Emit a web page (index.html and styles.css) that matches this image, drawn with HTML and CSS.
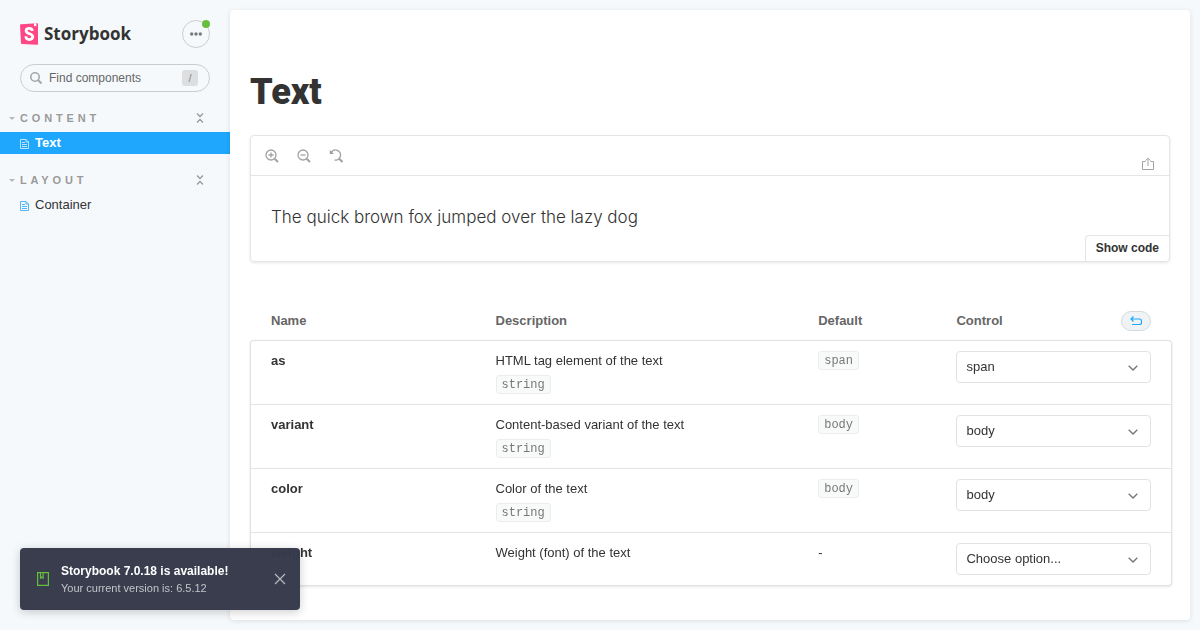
FILE: index.html
```html
<!DOCTYPE html>
<html lang="en">
  <head>
    <meta charset="UTF-8" />
    <meta name="viewport" content="width=device-width, initial-scale=1.0" />
    <title>Content / Text - Storybook</title>
    <link rel="stylesheet" href="styles.css">
  </head>
  <body>
    <nav class="sidebar">
      <div class="sidebar-header">
        <a class="brand" href="#">
          <svg width="19" height="22" viewBox="0 0 19 22" aria-hidden="true">
            <path d="M1 1.3 17.4 0.2a.6.6 0 0 1 .6.6V21a.7.7 0 0 1-.7.8L1.7 21a.7.7 0 0 1-.7-.7L0 2.100Q0 1.400 1 1.300z" fill="#ff4785" />
            <path d="M14 .4l2.300-.1.1 3-.4.1-.8-.7-1.200.6z" fill="#fff" />
            <path d="M12.300 8C12.200 6 10.900 5.300 9.300 5.300 7.400 5.300 6.100 6.200 6.100 7.800c0 3.600 6.600 2.300 6.600 5.800 0 1.800-1.400 2.900-3.400 2.900-2.200 0-3.500-1-3.400-3.200" fill="none" stroke="#fff" stroke-width="2.800" />
          </svg>
          <span>Storybook</span>
        </a>
        <button class="menu-button" aria-label="Shortcuts">
          <svg width="14" height="14" viewBox="0 0 14 14" fill="#777a7d">
            <circle cx="2.700" cy="7" r="1.700" />
            <circle cx="7" cy="7" r="1.700" />
            <circle cx="11.300" cy="7" r="1.700" />
          </svg>
          <span class="menu-dot"></span>
        </button>
      </div>
      <label class="search">
        <svg width="12" height="12" viewBox="0 0 12 12" fill="none" stroke="#a5a7a9" stroke-width="1.600">
          <circle cx="5" cy="5" r="4.200" />
          <path d="M8 8l3.500 3.500" stroke-width="2" />
        </svg>
        <input type="text" placeholder="Find components" aria-label="Find components" />
        <kbd>/</kbd>
      </label>

      <section class="group">
        <div class="group-header">
          <button class="group-toggle"><span class="caret"></span>CONTENT</button>
          <button class="collapse" aria-label="Collapse content">
            <svg width="8" height="10" viewBox="0 0 8 10" fill="none" stroke="#999" stroke-width="1.400">
              <path d="M1 .5l3 3 3-3M1 9.500l3-3 3 3" />
            </svg>
          </button>
        </div>
        <a class="item selected" href="#text">
          <svg width="10" height="10" viewBox="0 0 10 10" fill="none" stroke="currentColor">
            <path d="M1.500.5h5.500l2.500 2.500v6.500h-8zM7 .5v2.500h2.500M3 3.500h3M3 5.500h5M3 7.500h5" />
          </svg>
          Text
        </a>
      </section>

      <section class="group">
        <div class="group-header">
          <button class="group-toggle"><span class="caret"></span>LAYOUT</button>
          <button class="collapse" aria-label="Collapse layout">
            <svg width="8" height="10" viewBox="0 0 8 10" fill="none" stroke="#999" stroke-width="1.400">
              <path d="M1 .5l3 3 3-3M1 9.500l3-3 3 3" />
            </svg>
          </button>
        </div>
        <a class="item" href="#container">
          <svg width="10" height="10" viewBox="0 0 10 10" fill="none" stroke="currentColor">
            <path d="M1.500.5h5.500l2.500 2.500v6.500h-8zM7 .5v2.500h2.500M3 3.500h3M3 5.500h5M3 7.500h5" />
          </svg>
          Container
        </a>
      </section>
    </nav>

    <main class="docs">
      <h1>Text</h1>

      <div class="preview">
        <div class="toolbar">
          <button aria-label="Zoom in">
            <svg width="14" height="14" viewBox="0 0 14 14">
              <circle cx="6" cy="6" r="5" />
              <path d="M9.700 9.700l3.300 3.300" stroke-width="2" />
              <path d="M3.500 6h5M6 3.500v5" />
            </svg>
          </button>
          <button aria-label="Zoom out">
            <svg width="14" height="14" viewBox="0 0 14 14">
              <circle cx="6" cy="6" r="5" />
              <path d="M9.700 9.700l3.300 3.300" stroke-width="2" />
              <path d="M3.500 6h5" />
            </svg>
          </button>
          <button aria-label="Reset zoom">
            <svg width="14" height="14" viewBox="0 0 14 14">
              <path d="M2.500 3A5 5 0 1 1 5.500 10.900" />
              <path d="M10.200 9.700l3.300 3.300" stroke-width="2" />
              <path d="M.8 1v4h4z" fill="#999" stroke="none" />
            </svg>
          </button>
          <a class="share" href="#canvas" aria-label="Open canvas in new tab">
            <svg width="12" height="14" viewBox="0 0 12 14">
              <path d="M3.500 4.500h-3v8h11v-8h-3M6 9V1.500M3.500 3.700L6 1.200l2.500 2.500" />
            </svg>
          </a>
        </div>
        <div class="story">The quick brown fox jumped over the lazy dog</div>
        <button class="show-code">Show code</button>
      </div>

      <table class="args">
        <thead>
          <tr>
            <th>Name</th>
            <th>Description</th>
            <th>Default</th>
            <th>
              <div class="control-head">
                Control
                <button class="reset" aria-label="Reset controls">
                  <svg width="12" height="10" viewBox="0 0 12 10" fill="none" stroke="#1ea7fd" stroke-width="1.200">
                    <path d="M3.500.5L1 3l2.500 2.500M1 3h8.500a2 2 0 0 1 2 2v1.500a2 2 0 0 1-2 2H2" />
                  </svg>
                </button>
              </div>
            </th>
          </tr>
        </thead>
        <tbody>
          <tr>
            <td><label for="as">as</label></td>
            <td>HTML tag element of the text <code>string</code></td>
            <td><code>span</code></td>
            <td>
              <div class="select">
                <select id="as"><option>span</option></select>
                <svg width="10" height="6" viewBox="0 0 10 6"><path d="M.7.7L5 5 9.300.7" /></svg>
              </div>
            </td>
          </tr>
          <tr>
            <td><label for="variant">variant</label></td>
            <td>Content-based variant of the text <code>string</code></td>
            <td><code>body</code></td>
            <td>
              <div class="select">
                <select id="variant"><option>body</option></select>
                <svg width="10" height="6" viewBox="0 0 10 6"><path d="M.7.7L5 5 9.300.7" /></svg>
              </div>
            </td>
          </tr>
          <tr>
            <td><label for="color">color</label></td>
            <td>Color of the text <code>string</code></td>
            <td><code>body</code></td>
            <td>
              <div class="select">
                <select id="color"><option>body</option></select>
                <svg width="10" height="6" viewBox="0 0 10 6"><path d="M.7.7L5 5 9.300.7" /></svg>
              </div>
            </td>
          </tr>
          <tr>
            <td><label for="weight">weight</label></td>
            <td>Weight (font) of the text</td>
            <td>-</td>
            <td>
              <div class="select">
                <select id="weight"><option>Choose option...</option></select>
                <svg width="10" height="6" viewBox="0 0 10 6"><path d="M.7.7L5 5 9.300.7" /></svg>
              </div>
            </td>
          </tr>
        </tbody>
      </table>
    </main>

    <div class="notification" role="status">
      <svg width="12" height="14" viewBox="0 0 12 14" fill="none" stroke="#66bf3c" stroke-width="1.200">
        <path d="M.6.6h10.800v12.800H.6zM3.500.6v5.500L4.800 5l1.300 1.100V.6" />
      </svg>
      <div class="notification-text">
        <strong>Storybook 7.0.18 is available!</strong>
        <span>Your current version is: 6.5.12</span>
      </div>
      <button aria-label="Dismiss notification">
        <svg width="12" height="12" viewBox="0 0 12 12" fill="none" stroke="#b5b6bd" stroke-width="1.300">
          <path d="M1 1l10 10M11 1L1 11" />
        </svg>
      </button>
    </div>
  </body>
</html>
```
FILE: styles.css
```css
* {
  box-sizing: border-box;
}

body {
  margin: 0;
  display: flex;
  min-height: 100vh;
  background: #f6f9fc;
  color: #333;
  font-family: "Liberation Sans", Arial, sans-serif;
  font-size: 13px;
  line-height: 20px;
}

button {
  display: flex;
  align-items: center;
  justify-content: center;
  padding: 0;
  border: 0;
  background: none;
  font-family: inherit;
  cursor: pointer;
}

a {
  color: inherit;
  text-decoration: none;
}

svg {
  flex: none;
  display: block;
}

/* sidebar */
.sidebar {
  width: 230px;
  flex: none;
  padding-top: 20px;
}

.sidebar-header {
  display: flex;
  align-items: center;
  justify-content: space-between;
  padding: 0 20px;
}

.brand {
  display: flex;
  align-items: center;
  gap: 5px;
  font-family: "Open Sans", sans-serif;
  font-size: 17px;
  font-weight: 700;
}

.menu-button {
  position: relative;
  width: 28px;
  height: 28px;
  border: 1px solid #ccc;
  border-radius: 50%;
}

.menu-dot {
  position: absolute;
  top: -1px;
  right: -1px;
  width: 8px;
  height: 8px;
  border-radius: 50%;
  background: #66bf3c;
}

.search {
  display: flex;
  align-items: center;
  gap: 7px;
  height: 28px;
  margin: 16px 20px 12px;
  padding: 0 11px 0 9px;
  border: 1px solid #ccc;
  border-radius: 28px;
}

.search input {
  flex: 1;
  min-width: 0;
  padding: 0;
  border: 0;
  outline: 0;
  background: none;
  font-family: inherit;
  font-size: 12px;
}

.search input::placeholder {
  color: #666;
}

.search kbd {
  width: 16px;
  height: 16px;
  border-radius: 3px;
  background: #dcdedf;
  color: #888;
  font-family: inherit;
  font-size: 11px;
  line-height: 16px;
  text-align: center;
}

.group {
  margin-bottom: 12px;
}

.group-header {
  display: flex;
  align-items: center;
  justify-content: space-between;
  height: 28px;
  padding: 0 26px 0 9px;
}

.group-toggle {
  gap: 5px;
  color: #999;
  font-size: 11px;
  font-weight: 900;
  letter-spacing: 0.35em;
}

.caret {
  border: 3px solid transparent;
  border-top-color: #b5b7b9;
  border-bottom: 0;
}

.item {
  display: flex;
  align-items: center;
  gap: 6px;
  height: 22px;
  padding-left: 19px;
}

.item svg {
  margin-top: 2px;
  color: #4db8fd;
}

.item.selected {
  background: #1ea7fd;
  color: #fff;
  font-weight: bold;
}

.item.selected svg {
  color: #bce4fe;
}

/* docs page */
.docs {
  flex: 1;
  min-width: 0;
  margin: 10px 10px 10px 0;
  padding: 64px 20px 32px;
  border-radius: 4px;
  background: #fff;
  box-shadow: 0 1px 5px rgba(0, 0, 0, 0.1);
}

h1 {
  margin: 0 0 25px;
  font-family: Roboto, sans-serif;
  font-size: 36px;
  font-weight: 900;
  line-height: 36px;
}

.preview {
  display: flex;
  flex-direction: column;
  margin-bottom: 41px;
  border: 1px solid #e5e5e5;
  border-radius: 4px;
  box-shadow: 0 1px 3px rgba(0, 0, 0, 0.1);
}

.toolbar {
  display: flex;
  align-items: center;
  gap: 18px;
  height: 40px;
  padding: 0 15px 0 14px;
  border-bottom: 1px solid #e5e5e5;
}

.toolbar svg {
  fill: none;
  stroke: #a3a3a3;
  stroke-width: 1.3;
}

.share {
  margin-left: auto;
  padding-top: 16px;
}

.toolbar .share svg {
  stroke-width: 1;
}

.story {
  padding: 31px 20px 8px;
  font-family: Inter, sans-serif;
  font-size: 17px;
  font-weight: 300;
}

.show-code {
  align-self: flex-end;
  height: 26px;
  padding: 0 10px 2px;
  border: 1px solid #e5e5e5;
  border-width: 1px 0 0 1px;
  border-radius: 4px 0 0 0;
  color: #333;
  font-size: 12px;
  font-weight: bold;
}

/* args table */
.args {
  width: calc(100% + 2px);
  table-layout: fixed;
  border-collapse: separate;
  border-spacing: 0;
}

.args th {
  width: 25%;
  padding: 8px 15px 9px;
  color: #666;
  text-align: left;
}

.args th:nth-child(2) {
  width: 35%;
}

.args th:nth-child(3) {
  width: 15%;
}

.args th:first-child,
.args td:first-child {
  padding-left: 20px;
}

.args th:first-child {
  padding-left: 21px;
}

.args th:last-child,
.args td:last-child {
  padding-right: 20px;
}

.args th:last-child {
  padding-right: 21px;
}

.control-head {
  display: flex;
  justify-content: space-between;
}

.reset {
  width: 30px;
  height: 20px;
  border: 1px solid #d5d9dc;
  border-radius: 20px;
  background: #eff3f6;
}

.args tbody {
  filter: drop-shadow(0 1px 1px rgba(0, 0, 0, 0.1));
}

.args td {
  padding: 10px 15px;
  border-top: 1px solid #e2e2e2;
  background: #fff;
  vertical-align: top;
}

.args td:first-child {
  border-left: 1px solid #e2e2e2;
  font-weight: bold;
}

.args td:last-child {
  border-right: 1px solid #e2e2e2;
}

.args tr:last-child td {
  border-bottom: 1px solid #e2e2e2;
}

.args tbody tr:first-child td:first-child {
  border-top-left-radius: 4px;
}

.args tbody tr:first-child td:last-child {
  border-top-right-radius: 4px;
}

.args tbody tr:last-child td:first-child {
  border-bottom-left-radius: 4px;
}

.args tbody tr:last-child td:last-child {
  border-bottom-right-radius: 4px;
}

.args code {
  display: block;
  width: max-content;
  height: 19px;
  padding: 1px 5px 0;
  border: 1px solid #ebeeee;
  border-radius: 3px;
  background: #f8fafa;
  color: #777;
  font-family: "Liberation Mono", monospace;
  font-size: 12px;
  line-height: 17px;
}

.args td:nth-child(2) code {
  margin-top: 4px;
}

.select {
  position: relative;
}

.select select {
  display: block;
  width: 100%;
  height: 32px;
  padding: 0 30px 2px 9px;
  border: 1px solid #e2e2e2;
  border-radius: 4px;
  appearance: none;
  background: #fff;
  color: #333;
  font-family: inherit;
  font-size: 13px;
}

.select svg {
  position: absolute;
  top: 14px;
  right: 13px;
  fill: none;
  stroke: #777;
  stroke-width: 1.4;
  pointer-events: none;
}

/* update notice */
.notification {
  position: fixed;
  left: 20px;
  bottom: 20px;
  display: flex;
  align-items: center;
  gap: 12px;
  width: 280px;
  height: 62px;
  padding: 0 14px 0 17px;
  border-radius: 4px;
  background: rgba(54, 57, 74, 0.98);
  box-shadow: 0 2px 10px rgba(0, 0, 0, 0.2);
  color: #fff;
  font-size: 12px;
}

.notification-text {
  display: flex;
  flex: 1;
  flex-direction: column;
  padding-top: 2px;
  line-height: 17px;
}

.notification-text span {
  color: #c3c4c9;
  font-size: 11px;
}
```
